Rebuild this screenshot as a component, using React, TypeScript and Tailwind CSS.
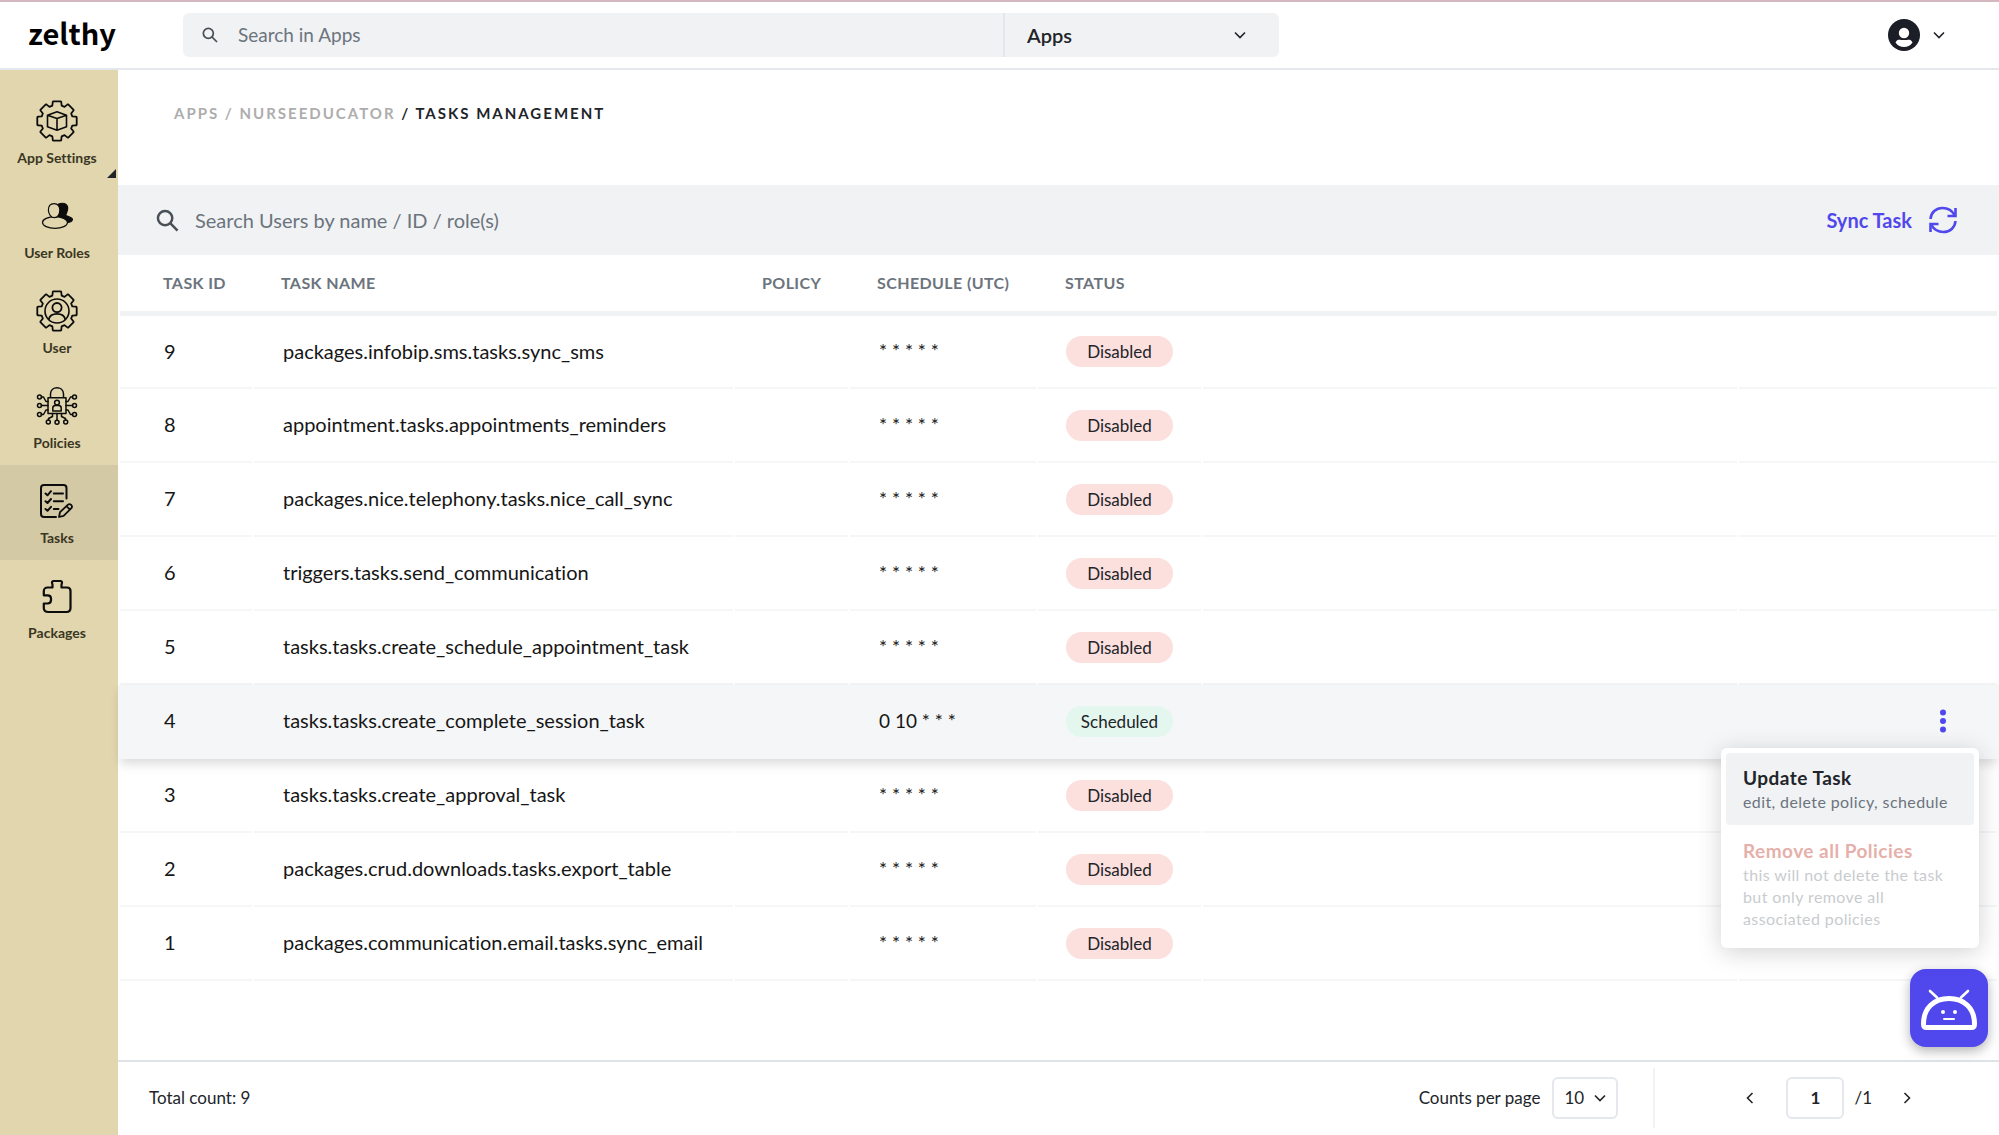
import React from "react";

type Task = { id: number; name: string; schedule: string; scheduled?: boolean };

const tasks: Task[] = [
  { id: 9, name: "packages.infobip.sms.tasks.sync_sms", schedule: "* * * * *" },
  { id: 8, name: "appointment.tasks.appointments_reminders", schedule: "* * * * *" },
  { id: 7, name: "packages.nice.telephony.tasks.nice_call_sync", schedule: "* * * * *" },
  { id: 6, name: "triggers.tasks.send_communication", schedule: "* * * * *" },
  { id: 5, name: "tasks.tasks.create_schedule_appointment_task", schedule: "* * * * *" },
  { id: 4, name: "tasks.tasks.create_complete_session_task", schedule: "0 10 * * *", scheduled: true },
  { id: 3, name: "tasks.tasks.create_approval_task", schedule: "* * * * *" },
  { id: 2, name: "packages.crud.downloads.tasks.export_table", schedule: "* * * * *" },
  { id: 1, name: "packages.communication.email.tasks.sync_email", schedule: "* * * * *" },
];

function gearPath(cx: number, cy: number, outer: number, inner: number) {
  const point = (r: number, deg: number) => {
    const a = (deg * Math.PI) / 180;
    return `${(cx + r * Math.sin(a)).toFixed(2)} ${(cy - r * Math.cos(a)).toFixed(2)}`;
  };
  let d = "";
  for (let k = 0; k < 8; k++) {
    const c = k * 45;
    d += `${k === 0 ? "M" : "L"}${point(inner, c - 17)}L${point(outer - 1, c - 13)}Q${point(outer, c - 13)} ${point(outer, c - 10)}L${point(outer, c + 10)}Q${point(outer, c + 13)} ${point(outer - 1, c + 13)}L${point(inner, c + 17)}`;
  }
  return d + "Z";
}

const iconProps = {
  width: 44,
  height: 44,
  viewBox: "0 0 44 44",
  fill: "none",
  stroke: "#0c0c0c",
  strokeWidth: 1.8,
  strokeLinecap: "round" as const,
  strokeLinejoin: "round" as const,
  "aria-hidden": true,
};

const AppSettingsIcon = () => (
  <svg {...iconProps}>
    <path d={gearPath(22, 22, 20, 16)} />
    <path d="M22 12.8 31.5 16.3V27.7L22 31.2 12.5 27.7V16.3ZM12.5 16.3 22 19.5 31.5 16.3M22 19.5V31.2" strokeWidth={1.6} />
  </svg>
);

const UserRolesIcon = () => (
  <svg {...iconProps} strokeWidth={1.2}>
    <path d="M23 10.2C30 7.500 33.500 11 32.500 16C32 18.500 31 20 30.500 21.500C33 22.500 37.500 23.500 37.500 25.500C37 28 34 28.600 31.500 28.400L24 24Z" fill="#0c0c0c" />
    <ellipse cx="20" cy="28.500" rx="12.500" ry="5.800" fill="#e1d6ae" />
    <path d="M19 9.600C23 9.600 25 12.500 24.800 16.500C24.600 20.500 22.600 23.600 19.400 23.600C16.200 23.600 13.700 20.500 13.400 16.500C13.100 12.300 15.300 9.600 19 9.600Z" fill="#e1d6ae" />
  </svg>
);

const UserIcon = () => (
  <svg {...iconProps}>
    <path d={gearPath(22, 22, 20, 16)} />
    <circle cx="22" cy="22" r="12" strokeWidth={1.6} />
    <circle cx="22" cy="18.600" r="4.600" strokeWidth={1.8} />
    <path d="M13.800 30.300C14.500 26.500 18 24.800 22 24.800S29.500 26.500 30.200 30.300" />
  </svg>
);

const PoliciesIcon = () => (
  <svg {...iconProps} strokeWidth={1.5}>
    <path d="M13 13.800H31V29.500H13ZM15.500 13.800V10C15.500 1.500 28.500 1.500 28.500 10V13.800" />
    <circle cx="22" cy="18.600" r="2.400" />
    <path d="M17.800 27V24C17.800 22.500 19 21.600 20.500 21.600H23.500C25 21.600 26.200 22.500 26.200 24V27Z" />
    <path d="M13 17.500H11L8.500 13H6.300M13 21.600H6.300M13 26H11L8.500 30.500H6.300M31 17.500H33L35.500 13H37.700M31 21.600H37.700M31 26H33L35.500 30.500H37.700M22 29.500V36.500M17.500 29.500V32.500L13.500 34.500V36M26.500 29.500V32.500L30.500 34.500V36" />
    <circle cx="4.500" cy="13" r="2" />
    <circle cx="4.500" cy="21.600" r="2" />
    <circle cx="4.500" cy="30.500" r="2" />
    <circle cx="39.500" cy="13" r="2" />
    <circle cx="39.500" cy="21.600" r="2" />
    <circle cx="39.500" cy="30.500" r="2" />
    <circle cx="22" cy="38.300" r="2" />
    <circle cx="13.300" cy="38" r="2" />
    <circle cx="30.700" cy="38" r="2" />
  </svg>
);

const TasksIcon = () => (
  <svg {...iconProps} strokeWidth={2}>
    <path d="M31.500 19.500V9C31.500 7 30.500 6 28.500 6H9C7 6 6 7 6 9V35C6 37 7 38 9 38H21" />
    <path d="M10.500 14.500 12.500 16.300 16 12.200M10.500 22.200 12.500 24 16 20M10.500 30 12.500 31.800 16 27.800M18.800 14.500H28M18.800 22.200H28M18.800 30H23.500" />
    <path d="M24 38 25 33.200 33 25.600C35 24 38.200 27 36.400 29.200L28.600 36.800ZM31.500 27.200 34.900 30.600" strokeWidth={1.8} />
  </svg>
);

const PackagesIcon = () => (
  <svg {...iconProps} strokeWidth={2.200}>
    <path d="M17.500 13.500V11C17.500 10 17 9.500 17 8.600C17 7.600 17.600 7 18.600 7H25.400C26.400 7 27 7.600 27 8.600C27 9.500 26.500 10 26.500 11V13.500H32C34 13.500 35.500 15 35.500 17V34C35.500 36.500 34 38 31.500 38H13.500C10.500 38 8.800 36.500 8.800 34V29.500H12.500C15 29.500 16 28.500 16 26V24.500C16 22.300 15 21.300 12.500 21.300H8.800V17C8.800 15 10.500 13.500 12.500 13.500Z" />
  </svg>
);

const navItems = [
  { label: "App Settings", Icon: AppSettingsIcon, corner: true },
  { label: "User Roles", Icon: UserRolesIcon },
  { label: "User", Icon: UserIcon },
  { label: "Policies", Icon: PoliciesIcon },
  { label: "Tasks", Icon: TasksIcon, active: true },
  { label: "Packages", Icon: PackagesIcon },
];

function SearchIcon({ className }: { className: string }) {
  return (
    <svg className={className} viewBox="0 0 24 24" fill="none" stroke="currentColor" strokeWidth={2.600} aria-hidden="true">
      <circle cx="9.500" cy="9.500" r="7.500" />
      <path d="M14.800 14.800 22.500 22.500" />
    </svg>
  );
}

function Chevron({ className }: { className: string }) {
  return (
    <svg className={className} viewBox="0 0 12 12" fill="none" stroke="currentColor" strokeWidth={1.6} aria-hidden="true">
      <path d="M1 3.500 6 8.500 11 3.500" />
    </svg>
  );
}

function RowMenu() {
  return (
    <div className="absolute top-[63px] right-[18px] z-20 w-[258px] rounded-md bg-white p-[5px] shadow-[0_4px_24px_rgba(0,0,0,0.18)]">
      <button type="button" className="block w-full rounded-sm bg-[#f0f2f4] py-3 pl-[17px] text-left">
        <span className="block text-[19px] leading-[26px] font-bold tracking-wide text-[#212429]">Update Task</span>
        <span className="block text-base leading-[22px] tracking-wide whitespace-nowrap text-[#6c747d]">edit, delete policy, schedule</span>
      </button>
      <button type="button" disabled className="block w-full pt-[13px] pr-5 pb-[13px] pl-[17px] text-left">
        <span className="block text-[19px] leading-[26px] font-bold tracking-wide text-[#e6b0aa]">Remove all Policies</span>
        <span className="block text-base leading-[22px] tracking-wide text-[#c9cccf]">this will not delete the task but only remove all associated policies</span>
      </button>
    </div>
  );
}

function TaskRow({ task }: { task: Task }) {
  const border = "border-b-2 border-[#f5f6f7]";
  return (
    <tr className={task.scheduled ? "relative z-10 h-[74px] bg-[#f5f6f8] shadow-[0_5px_10px_rgba(0,0,0,0.14)] [&>td]:shadow-[2px_0_0_#f5f6f8,-2px_0_0_#f5f6f8]" : "h-[74px] first:h-[73px]"}>
      <td className={`${border} pb-[2px] pl-11`}>{task.id}</td>
      <td className={`${border} pb-[2px] pl-[29px]`}>{task.name}</td>
      <td className={border}></td>
      <td className={`${border} pl-[29px] text-[19px]`}>{task.schedule}</td>
      <td className={`${border} pl-7`}>
        <span className={task.scheduled ? "block h-[31px] w-[107px] rounded-full bg-[#e3f7ee] text-center text-[17px] leading-[31px] text-[#212429]" : "block h-[31px] w-[107px] rounded-full bg-[#fce0dd] text-center text-[17px] leading-[31px] text-[#212429]"}>
          {task.scheduled ? "Scheduled" : "Disabled"}
        </span>
      </td>
      <td className={border}></td>
      <td className={`${border} relative`}>
        {task.scheduled && (
          <>
            <button type="button" aria-label="Task actions" className="ml-auto mr-[42px] flex h-8 w-6 items-center justify-center">
              <svg width="6" height="24" viewBox="0 0 6 24" fill="#5048ed" aria-hidden="true">
                <circle cx="3" cy="3.500" r="3" />
                <circle cx="3" cy="12" r="3" />
                <circle cx="3" cy="20.500" r="3" />
              </svg>
            </button>
            <RowMenu />
          </>
        )}
      </td>
    </tr>
  );
}

export default function App() {
  return (
    <div className="flex min-h-screen flex-col bg-white font-['Lato',sans-serif] text-[#212429] [font-variant-ligatures:none]">
      <header className="flex h-[70px] items-center border-t-2 border-b-2 border-t-[#d4b8c0] border-b-[#e4e8ec] pr-[54px]">
        <a href="#" className="w-[183px] pb-[6px] pl-7 font-['Noto_Sans_CJK_JP','Noto_Sans',sans-serif] text-[29px] leading-10 font-bold text-black">zelthy</a>
        <div className="flex h-11 w-[1096px] rounded-md bg-[#f0f2f4]">
          <label className="flex flex-1 items-center gap-5 pl-[19px]">
            <SearchIcon className="size-4 text-[#4a5058]" />
            <input type="text" aria-label="Search in Apps" placeholder="Search in Apps" className="flex-1 bg-transparent text-[19px] outline-none placeholder:text-[#6c747d]" />
          </label>
          <div className="relative w-[276px] border-l-2 border-[#e4e7ea]">
            <select aria-label="Search scope" className="h-full w-full appearance-none bg-transparent pl-[22px] text-[20px] font-semibold outline-none">
              <option>Apps</option>
            </select>
            <Chevron className="pointer-events-none absolute top-4 right-[33px] size-3" />
          </div>
        </div>
        <button type="button" aria-label="Account" className="ml-auto flex items-center gap-[13px]">
          <svg width="32" height="32" viewBox="0 0 32 32" aria-hidden="true">
            <circle cx="16" cy="16" r="16" fill="#1b1e27" />
            <circle cx="16" cy="14" r="5.200" fill="#fff" />
            <path d="M7.500 23.500C9 19.500 12.500 21 16 21S23 19.500 24.500 23.500C22 27 19.500 28 16 28S10 27 7.500 23.500Z" fill="#fff" />
          </svg>
          <Chevron className="size-3" />
        </button>
      </header>

      <div className="flex flex-1">
        <nav className="w-[118px] shrink-0 bg-[#e1d6ae] pt-[15px]">
          {navItems.map(({ label, Icon, active, corner }) => (
            <a
              key={label}
              href="#"
              className={active ? "relative flex h-[95px] flex-col items-center bg-[#d3c9a4] pt-[14px] pr-1" : "relative flex h-[95px] flex-col items-center pt-[14px] pr-1"}
            >
              <Icon />
              <span className="mt-[5px] text-sm leading-5 font-bold text-[#3a3623]">{label}</span>
              {corner && (
                <svg className="absolute right-[2px] bottom-[2px]" width="9" height="9" viewBox="0 0 9 9" aria-hidden="true">
                  <path d="M9 0V9H0Z" fill="#212429" />
                </svg>
              )}
            </a>
          ))}
        </nav>

        <main className="flex min-w-0 flex-1 flex-col">
          <div className="h-[115px] pt-[33px] pl-14 text-[15px] leading-5 font-bold tracking-[2px]">
            <a href="#" className="text-[#adadad]">APPS</a>
            <span className="text-[#adadad]"> / </span>
            <a href="#" className="text-[#adadad]">NURSEEDUCATOR</a>
            <span> / TASKS MANAGEMENT</span>
          </div>

          <div className="flex h-[70px] items-center bg-[#f0f2f4] pr-[41px]">
            <label className="flex flex-1 items-center gap-4 pl-[38px]">
              <SearchIcon className="size-[23px] text-[#4a5058]" />
              <input type="text" aria-label="Search users" placeholder="Search Users by name / ID / role(s)" className="flex-1 bg-transparent text-[20px] outline-none placeholder:text-[#6c747d]" />
            </label>
            <button type="button" className="flex items-center gap-4 text-[20px] font-bold text-[#5048ed]">
              Sync Task
              <svg width="30" height="30" viewBox="0 0 30 30" fill="none" stroke="currentColor" strokeWidth={2.600} aria-hidden="true">
                <path d="M2.500 14C3 7.500 8 3 14.500 3C20 3 24.500 6 26.800 10.500M27.500 16C27 22.500 22 27 15.500 27C10 27 5.500 24 3.200 19.500" />
                <path d="M27.500 3V11H19.500M2.500 27V19H10.500" />
              </svg>
            </button>
          </div>

          <table className="w-full table-fixed border-separate border-spacing-x-[2px] border-spacing-y-0">
            <colgroup>
              <col className="w-[132px]" />
              <col className="w-[479px]" />
              <col className="w-[113px]" />
              <col className="w-[186px]" />
              <col className="w-[163px]" />
              <col />
              <col className="w-[258px]" />
            </colgroup>
            <thead>
              <tr className="h-[61px] text-left text-base tracking-wide text-[#6c747d] shadow-[inset_0_-5px_0_#f0f2f4] [&>th]:pb-[6px] [&>th]:pl-[27px] [&>th]:font-bold">
                <th className="pl-[43px]!">TASK ID</th>
                <th>TASK NAME</th>
                <th>POLICY</th>
                <th>SCHEDULE (UTC)</th>
                <th>STATUS</th>
                <th></th>
                <th></th>
              </tr>
            </thead>
            <tbody className="text-[20px] text-[#161616]">
              {tasks.map((task) => (
                <TaskRow key={task.id} task={task} />
              ))}
            </tbody>
          </table>

          <footer className="relative mt-auto flex h-[75px] items-center border-t-2 border-[#dde3e7] pb-[2px] pl-[31px] text-[17px]">
            <button type="button" aria-label="Open assistant" className="absolute right-[11px] bottom-[88px] size-[78px] rounded-2xl bg-[#5048ed] shadow-[0_4px_12px_rgba(0,0,0,0.3)]">
              <svg width="78" height="78" viewBox="0 0 78 78" fill="none" stroke="#fff" strokeLinecap="round" aria-hidden="true">
                <path d="M13.500 55C13.500 39 24 29.500 39 29.500S64.500 39 64.500 55C64.500 57.500 63.500 58.500 61.500 58.500H16.500C14.500 58.500 13.500 57.500 13.500 55Z" strokeWidth={5} />
                <path d="M27 28.500 20 22M51 28.500 58 22" strokeWidth={2.600} />
                <path d="M34 50H44" strokeWidth={2} />
                <circle cx="33" cy="43" r="2" fill="#fff" stroke="none" />
                <circle cx="45" cy="43" r="2" fill="#fff" stroke="none" />
              </svg>
            </button>
            <span>Total count: 9</span>
            <label htmlFor="page-size" className="ml-auto">Counts per page</label>
            <div className="relative ml-3 h-[42px] w-[66px] rounded-md border-2 border-[#e4e8ec]">
              <select id="page-size" className="h-full w-full appearance-none bg-transparent pl-[10px] text-[17px] outline-none">
                <option>10</option>
              </select>
              <Chevron className="pointer-events-none absolute top-[13px] right-[10px] size-3" />
            </div>
            <div className="ml-[35px] h-[60px] w-[2px] bg-[#f0f2f4]" />
            <div className="mr-[84px] ml-[87px] flex items-center">
              <button type="button" aria-label="Previous page" className="flex size-4 items-center justify-center">
                <Chevron className="size-3 rotate-90" />
              </button>
              <input type="text" aria-label="Page" defaultValue="1" className="ml-[28px] h-[42px] w-[58px] rounded-md border-2 border-[#e4e8ec] text-center text-[17px] font-bold outline-none" />
              <span className="ml-[10px]">/1</span>
              <button type="button" aria-label="Next page" className="ml-[27px] flex size-4 items-center justify-center">
                <Chevron className="size-3 -rotate-90" />
              </button>
            </div>
          </footer>
        </main>
      </div>
    </div>
  );
}
